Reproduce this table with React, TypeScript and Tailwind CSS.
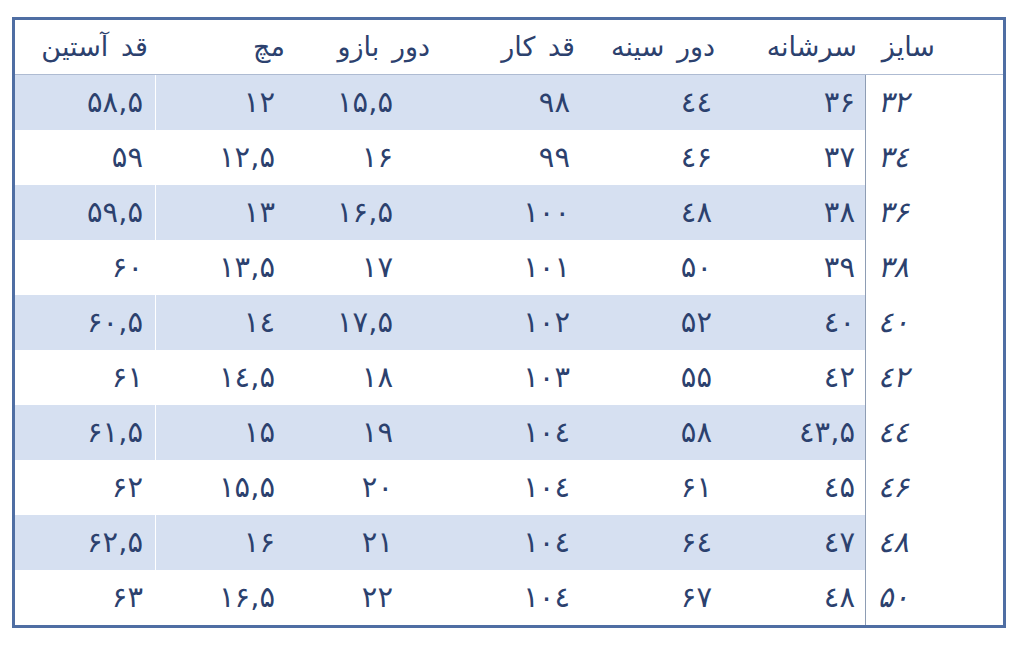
import React from 'react';

// size, shoulder, chest, length, arm, wrist, sleeve
const ROWS: string[][] = [
  ['32', '36', '44', '98', '15,5', '12', '58,5'],
  ['34', '37', '46', '99', '16', '12,5', '59'],
  ['36', '38', '48', '100', '16,5', '13', '59,5'],
  ['38', '39', '50', '101', '17', '13,5', '60'],
  ['40', '40', '52', '102', '17,5', '14', '60,5'],
  ['42', '42', '55', '103', '18', '14,5', '61'],
  ['44', '43,5', '58', '104', '19', '15', '61,5'],
  ['46', '45', '61', '104', '20', '15,5', '62'],
  ['48', '47', '64', '104', '21', '16', '62,5'],
  ['50', '48', '67', '104', '22', '16,5', '63'],
];

const DIGITS = ['۰', '۱', '۲', '۳', '٤', '۵', '۶', '۷', '۸', '۹'];

function fa(s: string) {
  return s.replace(/[0-9]/g, (d) => DIGITS[Number(d)]);
}

function Num({ v, slant }: { v: string; slant?: boolean }) {
  return (
    <span
      dir="ltr"
      className={`[unicode-bidi:bidi-override] ${slant ? 'inline-block -skew-x-[14deg]' : ''}`}
    >
      {fa(v)}
    </span>
  );
}

export default function App() {
  return (
    <div
      className="w-[1024px] h-[647px] bg-white pt-[17px] pl-[12px] text-[#2c416e]"
      style={{ fontFamily: '"DejaVu Sans", sans-serif' }}
    >
      <div className="w-[994px] border-[3px] border-[#4f6ea3]">
        {/* Header */}
        <div className="flex h-[55px] items-center border-b border-[#aebbd2] text-[27px] [word-spacing:4px]" dir="ltr">
          <div className="w-[133px] text-right" dir="rtl">قد آستین</div>
          <div className="w-[137px] text-right" dir="rtl">مچ</div>
          <div className="w-[145px] text-right" dir="rtl">دور بازو</div>
          <div className="w-[145px] text-right" dir="rtl">قد کار</div>
          <div className="w-[140px] text-right" dir="rtl">دور سینه</div>
          <div className="w-[142px] text-right" dir="rtl">سرشانه</div>
          <div className="w-[78px] text-right" dir="rtl">سایز</div>
          <div className="flex-1" />
        </div>

        {/* Body */}
        {ROWS.map((r, i) => {
          const blue = i % 2 === 0;
          const bg = blue ? 'bg-[#d6e0f1]' : 'bg-white';
          return (
            <div key={i} className="flex h-[55px] text-[29px]" dir="ltr">
              <div className={`w-[140px] flex items-center justify-end pr-[12px] ${bg}`}>
                <Num v={r[6]} />
              </div>
              <div className={`w-[130px] flex items-center justify-end pr-[10px] border-l border-white ${bg}`}>
                <Num v={r[5]} />
              </div>
              <div className={`w-[118px] flex items-center justify-end pr-[10px] ${bg}`}>
                <Num v={r[4]} />
              </div>
              <div className={`w-[177px] flex items-center justify-end pr-[10px] ${bg}`}>
                <Num v={r[3]} />
              </div>
              <div className={`w-[142px] flex items-center justify-end pr-[10px] ${bg}`}>
                <Num v={r[2]} />
              </div>
              <div className={`w-[143px] flex items-center justify-end pr-[10px] ${bg}`}>
                <Num v={r[1]} />
              </div>
              <div className="w-[138px] flex items-center pl-[14px] border-l border-[#8e9db4] bg-white">
                <Num v={r[0]} slant />
              </div>
            </div>
          );
        })}
      </div>
    </div>
  );
}
